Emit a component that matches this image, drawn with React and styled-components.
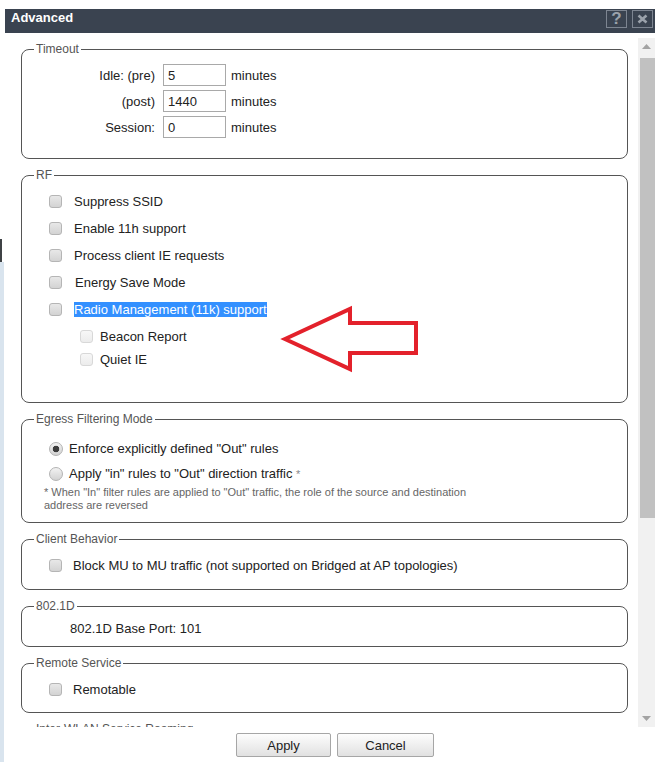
import React from 'react';
import styled, { createGlobalStyle } from 'styled-components';

const GlobalStyle = createGlobalStyle`
  html, body {
    margin: 0;
    padding: 0;
    background: #ffffff;
  }
  body {
    font-family: "Liberation Sans", Arial, sans-serif;
    font-size: 13px;
    color: #222;
  }
`;

const Page = styled.div`
  position: relative;
  display: flex;
  width: 672px;
  height: 762px;
  overflow: hidden;
`;

const Backdrop = styled.div`
  width: 4px;
  display: flex;
  flex-direction: column;
  padding-top: 239px;
  box-sizing: border-box;
`;

const BackdropEdge = styled.div`
  width: 2px;
  height: 23px;
  background: #3f4245;
`;

const BackdropFill = styled.div`
  flex: 1;
  background: #d9e4ee;
`;

const Dialog = styled.div`
  margin-left: 1px;
  width: 650px;
  padding-top: 9px;
  display: flex;
  flex-direction: column;
`;

const TitleBar = styled.div`
  height: 24px;
  background: #3a4350;
  display: flex;
  align-items: flex-start;
  padding: 1px 2px 0 6px;
  box-sizing: border-box;
`;

const Title = styled.div`
  flex: 1;
  color: #fff;
  font-weight: bold;
  font-size: 13px;
  line-height: 16px;
`;

const TitleButton = styled.div`
  width: 21px;
  height: 18px;
  box-sizing: border-box;
  border: 1px solid #7d8591;
  margin-left: ${p => p.$gap || 0}px;
  display: flex;
  align-items: center;
  justify-content: center;
  color: #9ba2ab;
  font-weight: bold;
  font-size: 17px;
  line-height: 16px;
`;

const Body = styled.div`
  display: flex;
  height: 694px;
`;

const ScrollArea = styled.div`
  flex: 1;
  overflow: hidden;
  padding: 9px 10px 0 16px;
  display: flex;
  flex-direction: column;
  gap: 9px;
`;

const Scrollbar = styled.div`
  width: 17px;
  margin-top: 5px;
  background: #f1f1f1;
  display: flex;
  flex-direction: column;
`;

const ScrollArrow = styled.div`
  height: 17px;
  display: flex;
  align-items: center;
  justify-content: center;
`;

const ScrollThumb = styled.div`
  height: 460px;
  margin: 3px 0 0 2px;
  background: #c1c1c1;
`;

const ScrollSpacer = styled.div`
  flex: 1;
`;

const Group = styled.fieldset`
  margin: 0;
  min-width: 0;
  border: 1px solid #555;
  border-radius: 8px;
  padding: ${p => p.$pad || '6px 12px 9px'};
  flex: none;
`;

const Legend = styled.legend`
  padding: 0 2px;
  font-size: 12px;
  line-height: 14px;
  color: #555;
`;

const FieldRows = styled.div`
  display: flex;
  flex-direction: column;
  gap: 4px;
`;

const FieldRow = styled.div`
  display: flex;
  align-items: center;
  height: 22px;
`;

const FieldLabel = styled.span`
  width: 121px;
  text-align: right;
`;

const TextBox = styled.input`
  width: 63px;
  height: 22px;
  box-sizing: border-box;
  margin: 0 5px 0 8px;
  border: 1px solid #a9a9a9;
  padding: 0 4px;
  font-family: "Liberation Sans", Arial, sans-serif;
  font-size: 13px;
  color: #222;
  outline: none;
`;

const OptionRow = styled.div`
  display: flex;
  align-items: center;
  height: ${p => p.$h || 27}px;
  padding-left: ${p => p.$indent || 15}px;
`;

const Check = styled.input.attrs({ type: 'checkbox', readOnly: true })`
  appearance: none;
  margin: 0 ${p => p.$gap || 12}px 0 0;
  width: 13px;
  height: 13px;
  flex: none;
  border-radius: 3px;
  border: 1px solid ${p => (p.$dim ? '#d8d8d8' : '#b5b5b5')};
  background: ${p =>
    p.$dim ? 'linear-gradient(#f7f7f7, #ececec)' : 'linear-gradient(#e8e8e8, #d3d3d3)'};
`;

const Radio = styled.input.attrs({ type: 'radio', readOnly: true })`
  appearance: none;
  margin: 0 6px 0 0;
  width: 14px;
  height: 14px;
  flex: none;
  border-radius: 50%;
  border: 1px solid #b3b3b3;
  background: linear-gradient(#f2f2f2, #d2d2d2);
  &:checked {
    background: radial-gradient(circle, #3d3d3d 0 3px, transparent 3.6px),
      linear-gradient(#f2f2f2, #d2d2d2);
  }
`;

const OptionText = styled.span`
  white-space: nowrap;
`;

const Selected = styled.span`
  background: #3390ff;
  color: #fff;
  line-height: 15px;
`;

const Star = styled.span`
  color: #888;
  font-size: 11px;
`;

const SubOptions = styled.div`
  margin-top: 2px;
`;

const Note = styled.div`
  font-size: 11px;
  line-height: 13px;
  color: #666;
  padding-left: 10px;
`;

const PlainLine = styled.div`
  height: 20px;
  display: flex;
  align-items: center;
  padding-left: 36px;
`;

const Footer = styled.div`
  display: flex;
  gap: 6px;
  padding: 6px 0 0 231px;
`;

const Button = styled.button`
  width: ${p => p.$w || 95}px;
  height: 24px;
  border: 1px solid #a6a6a6;
  border-radius: 2px;
  background: linear-gradient(#fdfdfd, #e1e1e1);
  font-family: "Liberation Sans", Arial, sans-serif;
  font-size: 13px;
  color: #222;
  padding: 0;
`;

const Arrow = styled.svg`
  position: absolute;
  left: 279px;
  top: 303px;
`;

function Triangle({ down }) {
  return (
    <svg width="9" height="5" viewBox="0 0 9 5">
      <path d={down ? 'M0 0 H9 L4.5 5 Z' : 'M0 5 H9 L4.5 0 Z'} fill="#a3a3a3" />
    </svg>
  );
}

export default function App() {
  return (
    <Page>
      <GlobalStyle />
      <Backdrop>
        <BackdropEdge />
        <BackdropFill />
      </Backdrop>
      <Dialog>
        <TitleBar>
          <Title>Advanced</Title>
          <TitleButton>?</TitleButton>
          <TitleButton $gap={5}>
            <svg width="11" height="10" viewBox="0 0 11 10">
              <path d="M1.5 1.5 L9.5 8.5 M9.5 1.5 L1.5 8.5" stroke="#9ba2ab" strokeWidth="2.6" />
            </svg>
          </TitleButton>
        </TitleBar>
        <Body>
          <ScrollArea>
            <Group $pad="8px 12px 20px">
              <Legend>Timeout</Legend>
              <FieldRows>
                <FieldRow>
                  <FieldLabel>Idle: (pre)</FieldLabel>
                  <TextBox defaultValue="5" />
                  <span>minutes</span>
                </FieldRow>
                <FieldRow>
                  <FieldLabel>(post)</FieldLabel>
                  <TextBox defaultValue="1440" />
                  <span>minutes</span>
                </FieldRow>
                <FieldRow>
                  <FieldLabel>Session:</FieldLabel>
                  <TextBox defaultValue="0" />
                  <span>minutes</span>
                </FieldRow>
              </FieldRows>
            </Group>

            <Group $pad="6px 12px 31px">
              <Legend>RF</Legend>
              <OptionRow><Check /><OptionText>Suppress SSID</OptionText></OptionRow>
              <OptionRow><Check /><OptionText>Enable 11h support</OptionText></OptionRow>
              <OptionRow><Check /><OptionText>Process client IE requests</OptionText></OptionRow>
              <OptionRow><Check $gap={13} /><OptionText>Energy Save Mode</OptionText></OptionRow>
              <OptionRow>
                <Check />
                <OptionText><Selected>Radio Management (11k) support</Selected></OptionText>
              </OptionRow>
              <SubOptions>
                <OptionRow $h={23} $indent={46}><Check $dim $gap={7} /><OptionText>Beacon Report</OptionText></OptionRow>
                <OptionRow $h={23} $indent={46}><Check $dim $gap={7} /><OptionText>Quiet IE</OptionText></OptionRow>
              </SubOptions>
            </Group>

            <Group $pad="10px 12px 10px">
              <Legend>Egress Filtering Mode</Legend>
              <OptionRow $h={25}>
                <Radio name="egress" defaultChecked />
                <OptionText>Enforce explicitly defined "Out" rules</OptionText>
              </OptionRow>
              <OptionRow $h={25}>
                <Radio name="egress" />
                <OptionText>Apply "in" rules to "Out" direction traffic <Star>*</Star></OptionText>
              </OptionRow>
              <Note>
                * When "In" filter rules are applied to "Out" traffic, the role of the source and destination
                <br />
                address are reversed
              </Note>
            </Group>

            <Group $pad="6px 12px 10px">
              <Legend>Client Behavior</Legend>
              <OptionRow>
                <Check $gap={11} />
                <OptionText>Block MU to MU traffic (not supported on Bridged at AP topologies)</OptionText>
              </OptionRow>
            </Group>

            <Group $pad="5px 12px 8px">
              <Legend>802.1D</Legend>
              <PlainLine>802.1D Base Port: 101</PlainLine>
            </Group>

            <Group>
              <Legend>Remote Service</Legend>
              <OptionRow>
                <Check $gap={11} />
                <OptionText>Remotable</OptionText>
              </OptionRow>
            </Group>

            <Group>
              <Legend>Inter-WLAN Service Roaming</Legend>
              <OptionRow>
                <Check $gap={11} />
                <OptionText>Enable</OptionText>
              </OptionRow>
            </Group>
          </ScrollArea>
          <Scrollbar>
            <ScrollArrow><Triangle /></ScrollArrow>
            <ScrollThumb />
            <ScrollSpacer />
            <ScrollArrow><Triangle down /></ScrollArrow>
          </Scrollbar>
        </Body>
        <Footer>
          <Button>Apply</Button>
          <Button $w={97}>Cancel</Button>
        </Footer>
      </Dialog>
      <Arrow width="142" height="72" viewBox="0 0 142 72">
        <polygon
          points="6,36 71,6 71,20 137,20 137,50 71,50 71,66"
          fill="none"
          stroke="#e3212b"
          strokeWidth="4"
          strokeLinejoin="miter"
        />
      </Arrow>
    </Page>
  );
}
